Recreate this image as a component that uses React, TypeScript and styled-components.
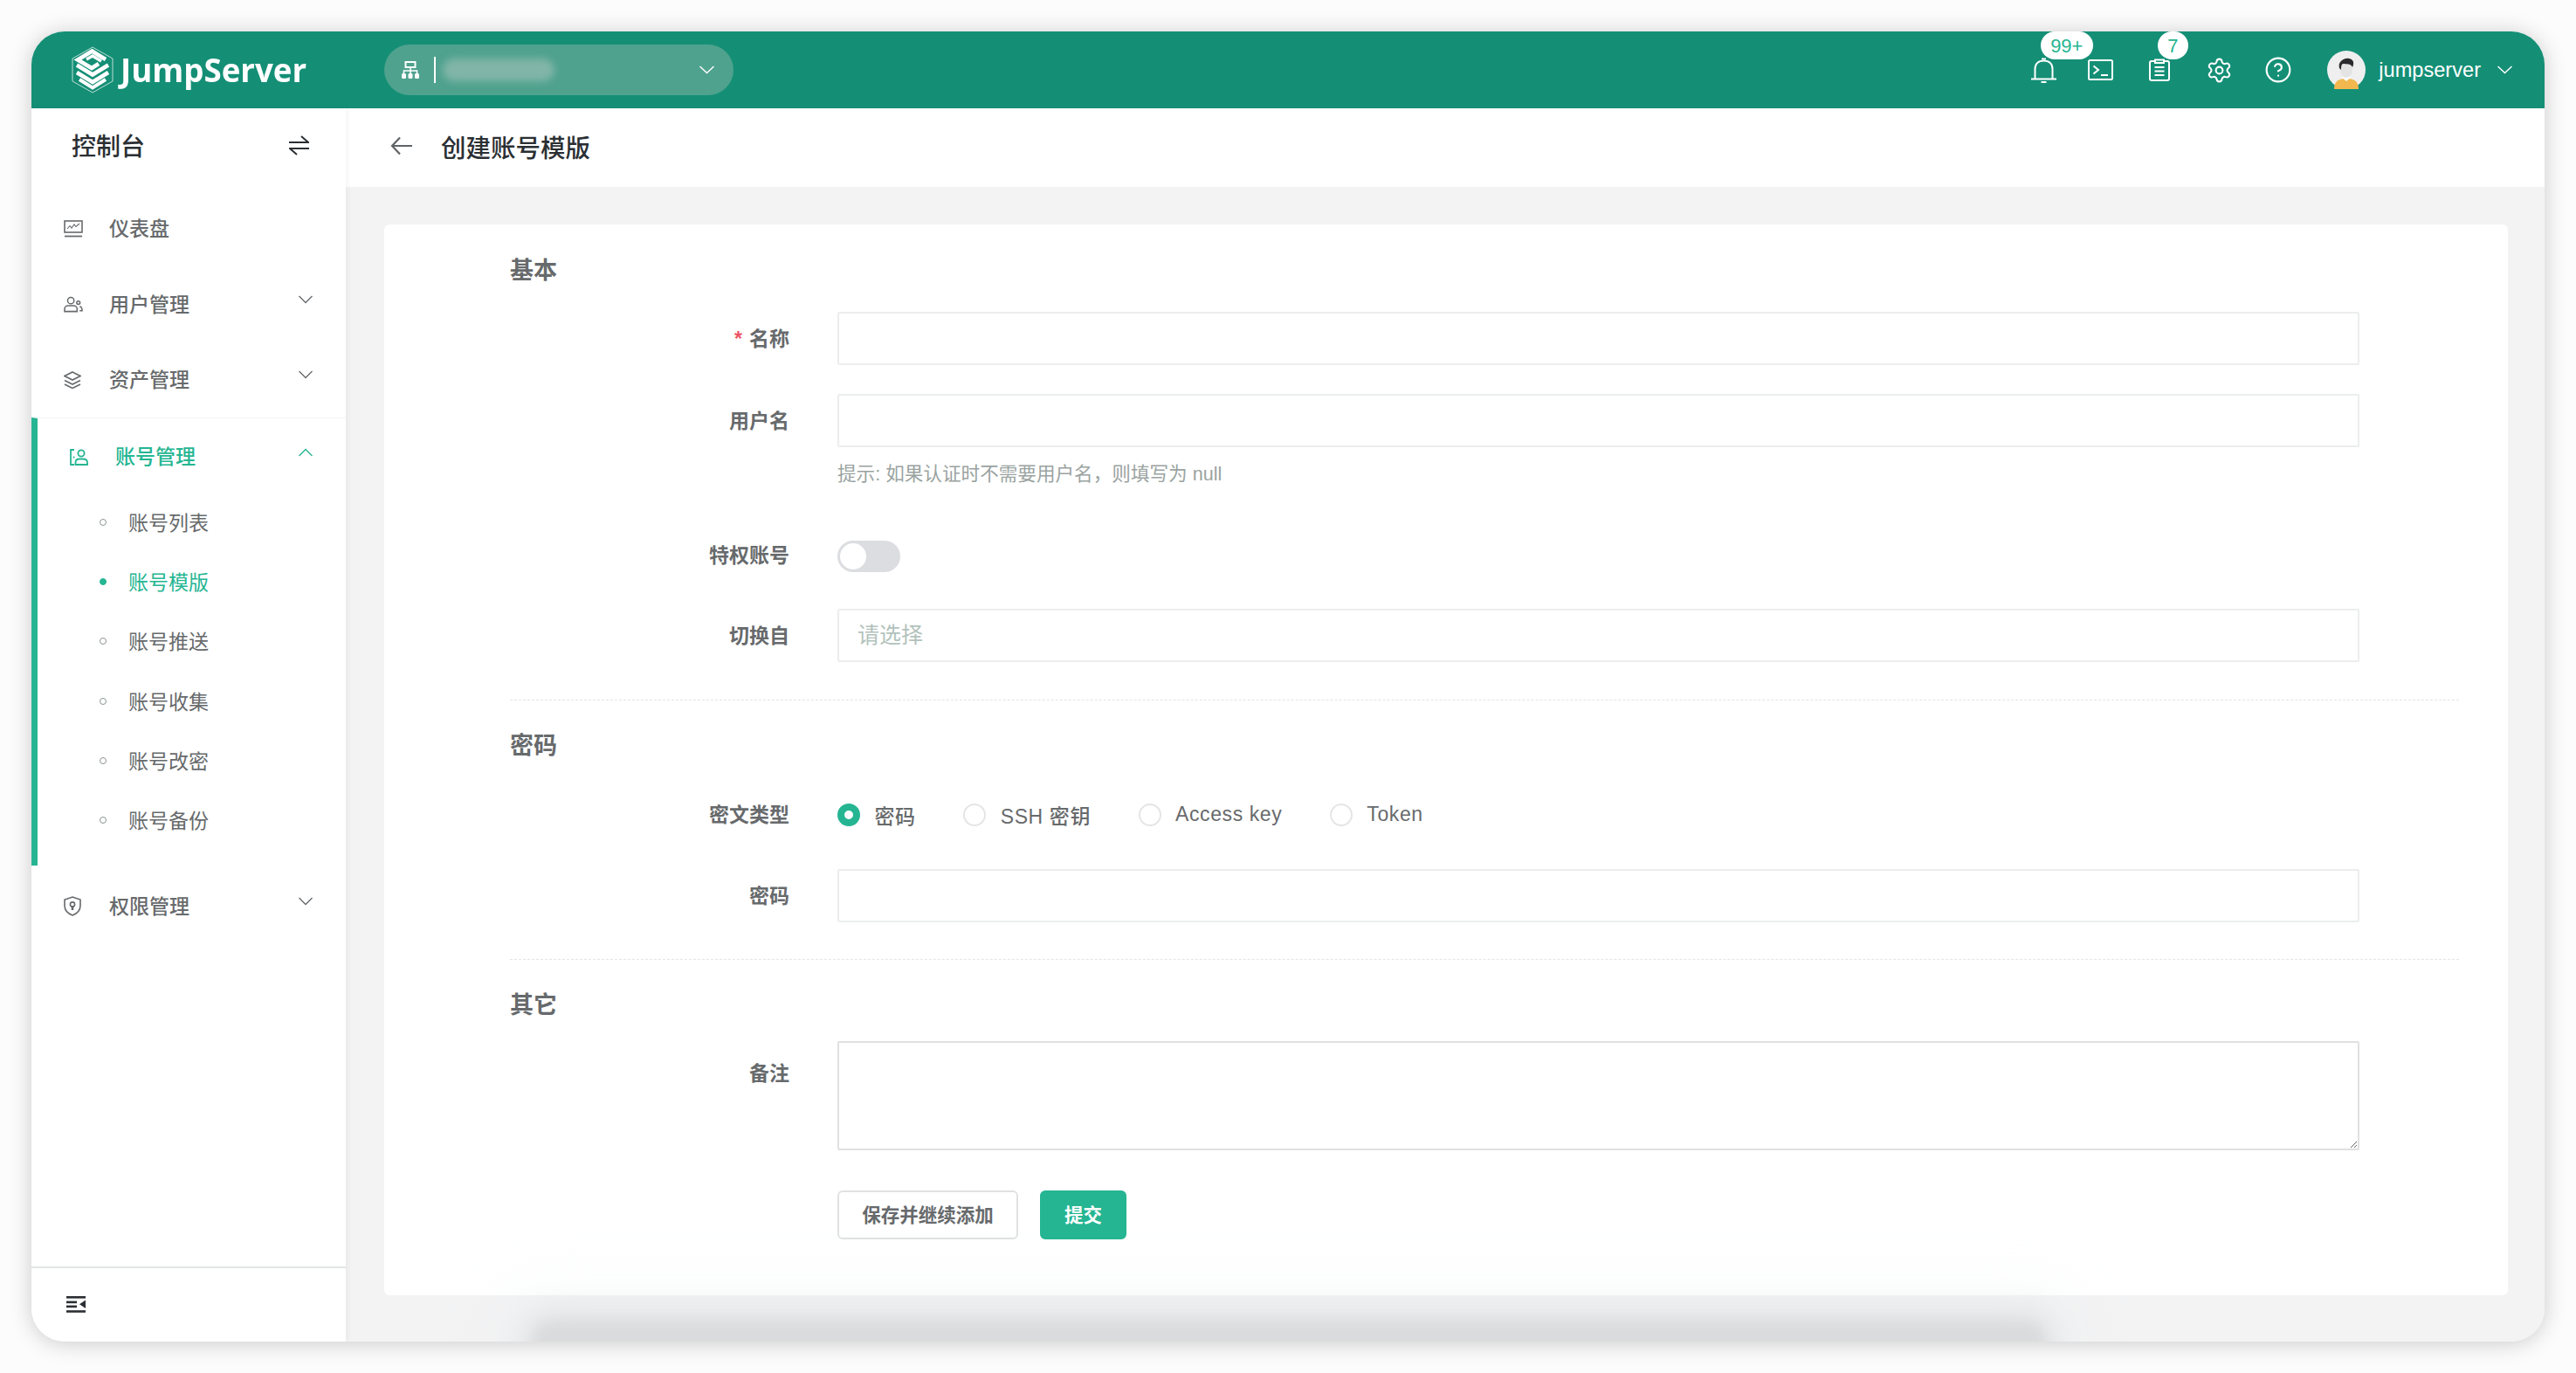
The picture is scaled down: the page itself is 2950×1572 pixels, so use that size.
import React from "react";
import styled, { createGlobalStyle } from "styled-components";
import { Settings, CircleHelp } from "lucide-react";

const Global = createGlobalStyle`
  html, body {
    margin: 0;
    width: 2950px;
    height: 1572px;
    background: #fcfcfc;
    overflow: hidden;
  }
  * { box-sizing: border-box; }
  body { font-family: "Liberation Sans", "Noto Sans CJK SC", sans-serif; color: #676a6c; }
`;

const teal = "#25b592";
const grey = "#676a6c";

const Page = styled.div`
  padding: 36px;
`;

const Window = styled.div`
  width: 2878px;
  height: 1500px;
  border-radius: 38px;
  overflow: hidden;
  display: flex;
  flex-direction: column;
  background: #fff;
  box-shadow: 0 2px 26px rgba(0, 0, 0, 0.2);
`;

const Header = styled.header`
  height: 88px;
  flex: none;
  display: flex;
  align-items: center;
  background: #148f76;
  color: #fff;
`;

const Brand = styled.div`
  width: 404px;
  padding-left: 46px;
  display: flex;
  align-items: center;
  gap: 8px;
`;

const BrandName = styled.span`
  font-family: "Open Sans", "Liberation Sans", sans-serif;
  font-size: 38px;
  font-weight: 700;
  line-height: 54px;
  margin-top: -3px;
  color: #fff;
  transform: scaleX(0.965);
  transform-origin: left center;
`;

const OrgPill = styled.div`
  width: 400px;
  height: 58px;
  border-radius: 29px;
  background: #4fa28e;
  display: flex;
  align-items: center;
  padding: 0 22px 0 19px;
`;

const OrgDivider = styled.span`
  width: 2px;
  height: 30px;
  background: #fff;
  margin: 0 8px 0 16px;
`;

const OrgBlur = styled.span`
  width: 128px;
  height: 26px;
  border-radius: 13px;
  background: rgba(150, 190, 178, 0.7);
  filter: blur(4px);
`;

const OrgChevron = styled.span`
  margin-left: auto;
  display: flex;
`;

const Tools = styled.div`
  margin-left: auto;
  padding-right: 37px;
  display: flex;
  align-items: center;
  height: 100%;
`;

const ToolSlot = styled.div<{ $shift?: number }>`
  position: relative;
  width: 68px;
  height: 100%;
  padding-left: ${(p) => p.$shift || 0}px;
  display: flex;
  align-items: center;
  justify-content: center;
`;

const Badge = styled.span<{ $left: number; $width: number }>`
  position: absolute;
  top: 0;
  left: ${(p) => p.$left}px;
  width: ${(p) => p.$width}px;
  height: 32px;
  border-radius: 16px;
  background: #fff;
  color: ${teal};
  font-size: 22px;
  line-height: 34px;
  text-align: center;
`;

const Avatar = styled.span`
  display: flex;
  margin-left: 22px;
`;

const UserName = styled.span`
  margin-left: 15px;
  font-size: 23.6px;
  color: #fff;
`;

const UserChevron = styled.span`
  margin-left: 19px;
  display: flex;
`;

const Body = styled.div`
  flex: 1;
  min-height: 0;
  display: flex;
`;

const Sidebar = styled.aside`
  width: 360px;
  flex: none;
  display: flex;
  flex-direction: column;
  background: #fff;
  box-shadow: 2px 0 6px rgba(0, 0, 0, 0.05);
  z-index: 2;
`;

const SideHead = styled.div`
  height: 94px;
  flex: none;
  padding: 0 42px 10px 46px;
  display: flex;
  align-items: center;
  justify-content: space-between;
  font-size: 28px;
  font-weight: 500;
  color: #2b2f33;
`;

const Menu = styled.nav`
  flex: 1;
`;

const MenuItem = styled.div<{ $top?: number }>`
  height: 86.5px;
  margin-top: ${(p) => p.$top || 0}px;
  padding: 0 38px 2px 37px;
  display: flex;
  align-items: center;
  font-size: 23px;
  font-weight: 500;
  color: ${grey};
`;

const MenuIcon = styled.span`
  width: 22px;
  display: flex;
  margin: 4px 30px 0 0;
`;

const MenuArrow = styled.span<{ $up?: number }>`
  margin-left: auto;
  margin-top: ${(p) => p.$up ?? -8}px;
  display: flex;
`;

const ActiveGroup = styled.div`
  border-top: 1px solid #f1f2f3;
  border-left: 7px solid ${teal};
  padding-bottom: 17px;
`;

const ActiveHead = styled.div`
  height: 86px;
  padding: 0 38px 1px 37px;
  display: flex;
  align-items: center;
  font-size: 23px;
  font-weight: 500;
  color: ${teal};
`;

const SubItem = styled.div<{ $on?: boolean }>`
  height: 68.3px;
  padding: 0 0 4px 71px;
  display: flex;
  align-items: center;
  font-size: 23px;
  color: ${(p) => (p.$on ? teal : grey)};
`;

const SubDot = styled.span<{ $on?: boolean }>`
  width: 8px;
  height: 8px;
  border-radius: 50%;
  margin: 2px 25px 0 0;
  border: 1.5px solid ${(p) => (p.$on ? teal : "#8b9492")};
  background: ${(p) => (p.$on ? teal : "transparent")};
`;

const SideFoot = styled.div`
  height: 86px;
  flex: none;
  border-top: 2px solid #e3e4e5;
  padding-left: 40px;
  padding-bottom: 2px;
  display: flex;
  align-items: center;
`;

const Main = styled.main`
  position: relative;
  flex: 1;
  min-width: 0;
  overflow: hidden;
  background: #f3f3f4;

  /* soft shadow that bleeds up from below the window */
  &::after {
    content: "";
    position: absolute;
    left: 214px;
    bottom: -36px;
    width: 1733px;
    height: 60px;
    border-radius: 24px;
    background: #dadbdc;
    filter: blur(7px);
    box-shadow: 0 0 24px 16px rgba(224, 225, 227, 0.7), 0 0 60px 40px rgba(234, 235, 236, 0.22);
  }
`;

const PageHead = styled.div`
  height: 90px;
  padding: 0 0 4px 51px;
  display: flex;
  align-items: center;
  background: #fff;
`;

const PageTitle = styled.h1`
  margin: 0 0 0 33px;
  font-size: 28.5px;
  font-weight: 500;
  color: #2b2f33;
`;

const Content = styled.div`
  padding: 43px 42px 0 44px;
`;

const Card = styled.form`
  height: 1226px;
  border-radius: 6px;
  background: #fff;
  padding: 33px 56px 0 144px;
`;

const SectionTitle = styled.h3<{ $top?: number }>`
  margin: ${(p) => p.$top || 0}px 0 0;
  height: 40px;
  line-height: 40px;
  font-size: 27px;
  font-weight: 700;
  color: ${grey};
`;

const Field = styled.div<{ $top: number; $start?: boolean }>`
  margin-top: ${(p) => p.$top}px;
  display: grid;
  grid-template-columns: 320px 1743px;
  column-gap: 55px;
  align-items: ${(p) => (p.$start ? "start" : "center")};
  min-height: 61px;
`;

const Label = styled.label<{ $tall?: boolean; $up?: number }>`
  text-align: right;
  font-size: 23px;
  font-weight: 700;
  color: ${grey};
  margin-top: ${(p) => p.$up || 0}px;
  line-height: ${(p) => (p.$tall ? "74px" : "30px")};
`;

const Required = styled.span`
  color: #ed5565;
  margin-right: 8px;
`;

const TextInput = styled.input`
  display: block;
  width: 100%;
  height: 61px;
  padding: 0 21px;
  border: 2px solid #ecedee;
  border-radius: 2px;
  outline: none;
  background: #fff;
  font-family: inherit;
  font-size: 25px;

  &::placeholder {
    color: #b2c2bc;
    opacity: 1;
  }
`;

const TextArea = styled.textarea`
  display: block;
  width: 100%;
  height: 125px;
  border: 2px solid #e0e1e2;
  border-radius: 2px;
  outline: none;
  resize: both;
  background: #fff;
`;

const Hint = styled.div`
  margin: 16px 0 0 375px;
  height: 30px;
  line-height: 30px;
  font-size: 21.6px;
  color: #9aa3a1;
`;

const Toggle = styled.span`
  display: block;
  width: 72px;
  height: 36px;
  margin-top: -2px;
  padding: 3px;
  border-radius: 18px;
  background: #dcdde0;

  &::before {
    content: "";
    display: block;
    width: 30px;
    height: 30px;
    border-radius: 50%;
    background: #fff;
  }
`;

const Divider = styled.hr<{ $top: number }>`
  margin: ${(p) => p.$top}px 0 0;
  height: 0;
  border: 0;
  border-top: 1px dashed #e4e5e6;
`;

const RadioGroup = styled.div`
  display: flex;
  align-items: center;
  gap: 54.5px;
  margin-top: -2px;
`;

const RadioOption = styled.span`
  display: flex;
  align-items: center;
  gap: 16.5px;
  font-size: 23px;
  font-weight: 500;
  letter-spacing: 0.6px;
  color: ${grey};
`;

const RadioMark = styled.span<{ $on?: boolean }>`
  width: 26px;
  height: 26px;
  border-radius: 50%;
  border: ${(p) => (p.$on ? `8.5px solid ${teal}` : "2px solid #e4e5e6")};
  background: #fff;
`;

const Actions = styled.div`
  margin: 46px 0 0 375px;
  display: flex;
  gap: 25px;
`;

const Button = styled.button<{ $primary?: boolean }>`
  height: 56px;
  width: ${(p) => (p.$primary ? 99 : 207)}px;
  border-radius: 6px;
  border: 2px solid ${(p) => (p.$primary ? teal : "#e0e1e2")};
  background: ${(p) => (p.$primary ? teal : "#fff")};
  color: ${(p) => (p.$primary ? "#fff" : grey)};
  font-family: inherit;
  font-size: 21.5px;
  font-weight: 700;
  padding: 0 0 4px;
`;

const Chevron = ({ up, color, w = 16, h = 8 }: { up?: boolean; color: string; w?: number; h?: number }) => (
  <svg width={w} height={h + 2} viewBox="0 0 16 10" preserveAspectRatio="none" fill="none">
    <path d={up ? "M0.5 9 L8 1.5 L15.5 9" : "M0.5 1 L8 8.5 L15.5 1"} stroke={color} strokeWidth="1.3" />
  </svg>
);

const Logo = () => (
  <svg width="48" height="54" viewBox="0 0 48 54" fill="none">
    <path d="M24 1 L47 14 V40 L24 53 L1 40 V14 Z" stroke="#cfe6df" strokeWidth="0.9" />
    <path d="M39 15 L29 9 L23.5 5.5 L7 15.5 L23 25 L31 20" stroke="#fff" strokeWidth="4.6" />
    <path d="M17 15 L24 11 L34 17" stroke="#fff" strokeWidth="3.4" />
    <path d="M6 21.5 L24 32.5 L42 21.5" stroke="#fff" strokeWidth="4.6" />
    <path d="M6 30 L24 41 L42 30" stroke="#fff" strokeWidth="4.6" />
    <path d="M9 38 L24 47.5 L39 38" stroke="#fff" strokeWidth="4" />
  </svg>
);

const OrgIcon = () => (
  <svg width="22" height="21" viewBox="0 0 22 21" fill="none">
    <rect x="5.5" y="1" width="11" height="6" stroke="#fff" strokeWidth="2" />
    <path d="M11 7 V11 M3.5 14 V11 H18.5 V14 M11 11 V14" stroke="#fff" strokeWidth="1.6" />
    <rect x="1" y="14" width="5" height="6" rx="1.5" fill="#fff" />
    <rect x="8.5" y="14" width="5" height="6" rx="1.5" fill="#fff" />
    <rect x="16" y="14" width="5" height="6" rx="1.5" fill="#fff" />
  </svg>
);

const BellIcon = () => (
  <svg width="29" height="29" viewBox="0 0 29 29" fill="none" stroke="#fff" strokeWidth="2">
    <path d="M4.5 24 V13 C4.5 7 8.5 3.5 14.5 3.5 C20.5 3.5 24.5 7 24.5 13 V24" />
    <path d="M0 24.5 H29" />
    <path d="M12 1.5 H17" />
    <path d="M11.5 28 H17.5" />
  </svg>
);

const TerminalIcon = () => (
  <svg width="29" height="24" viewBox="0 0 29 24" fill="none" stroke="#fff" strokeWidth="2">
    <rect x="1" y="1" width="27" height="22" rx="1.5" />
    <path d="M6.5 7.5 L12 12 L6.5 16.5" />
    <path d="M15 18 H23" />
  </svg>
);

const ClipboardIcon = () => (
  <svg width="24" height="26" viewBox="0 0 24 26" fill="none" stroke="#fff" strokeWidth="2">
    <path d="M6 3 H3 A2 2 0 0 0 1 5 V23 A2 2 0 0 0 3 25 H21 A2 2 0 0 0 23 23 V5 A2 2 0 0 0 21 3 H18" />
    <path d="M7 1.5 H17 V5 H7 Z" />
    <path d="M6.5 10 H17.5 M6.5 14.5 H17.5 M6.5 19 H17.5" />
  </svg>
);

const UserAvatar = () => (
  <svg width="44" height="44" viewBox="0 0 44 44">
    <circle cx="22" cy="22" r="22" fill="#efefef" />
    <path d="M8 44 C8 34 14 32 22 32 C30 32 36 34 36 44 Z" fill="#f2b84f" />
    <path d="M17 31 L22 35 L27 31 L25 25 H19 Z" fill="#fafafa" />
    <ellipse cx="22" cy="22" rx="7" ry="9" fill="#e4e4e4" />
    <path d="M14 20 C12 12 20 8 25 9 C31 10 31 15 29 19 C27 14 22 16 18 15 C16 16 16 19 16 22 Z" fill="#2b2b2e" />
  </svg>
);

const menuStroke = { fill: "none", stroke: grey, strokeWidth: 1.6 };

const DashIcon = () => (
  <svg width="22" height="20" viewBox="0 0 22 20" {...menuStroke}>
    <rect x="1" y="1" width="20" height="13" />
    <path d="M4 10 L7 6.5 L9 9 L12 5 L14 7.5 L18 4" strokeWidth="1.1" />
    <path d="M1 18.5 H21" strokeWidth="1.8" />
  </svg>
);

const UsersIcon = () => (
  <svg width="23" height="19" viewBox="0 0 23 19" {...menuStroke}>
    <circle cx="8.5" cy="5" r="3.8" />
    <path d="M1 18 V15 C1 12.5 3 11 5 11 H12 C14 11 16 12.5 16 15 V18 Z" />
    <circle cx="17.5" cy="7.5" r="2" />
    <path d="M19 12 C21 12 22 14 22 17 H19" />
  </svg>
);

const StackIcon = () => (
  <svg width="20" height="20" viewBox="0 0 20 20" {...menuStroke}>
    <path d="M10 1 L19 5.5 L10 10 L1 5.5 Z" />
    <path d="M1 10.5 L10 15 L19 10.5" />
    <path d="M1 15 L10 19.5 L19 15" />
  </svg>
);

const AccountIcon = () => (
  <svg width="21" height="19" viewBox="0 0 21 19" fill="none" stroke={teal} strokeWidth="1.8">
    <path d="M5 1 H1 V18 H5" />
    <circle cx="13" cy="5" r="3.6" />
    <path d="M6.5 18 V15.5 C6.5 12.5 9 11.5 11 11.5 H15 C17.5 11.5 20 12.5 20 15.5 V18 Z" />
    <circle cx="4.6" cy="9.5" r="1" fill={teal} stroke="none" />
  </svg>
);

const ShieldIcon = () => (
  <svg width="20" height="23" viewBox="0 0 20 23" {...menuStroke}>
    <path d="M10 1 L19 4 V11 C19 16.5 15 20 10 22 C5 20 1 16.5 1 11 V4 Z" />
    <circle cx="10" cy="9.5" r="2.6" />
    <path d="M10 11 V16" strokeWidth="2.6" />
  </svg>
);

const SwapIcon = () => (
  <svg width="23" height="23" viewBox="0 0 23 23" fill="none" stroke="#2b2f33" strokeWidth="2">
    <path d="M0 8 H22 L14 1" />
    <path d="M23 15 H1 L9 22" />
  </svg>
);

const BackIcon = () => (
  <svg width="25" height="22" viewBox="0 0 25 22" fill="none" stroke="#5f6468" strokeWidth="2.2">
    <path d="M25 11 H2" />
    <path d="M11 1.5 L2 11 L11 20.5" />
  </svg>
);

const CollapseIcon = () => (
  <svg width="22" height="19" viewBox="0 0 22 19" fill="#2b2f33">
    <rect x="0" y="0" width="22" height="2.6" />
    <rect x="0" y="5.6" width="12" height="2.6" />
    <rect x="0" y="10.6" width="12" height="2.6" />
    <rect x="0" y="16.2" width="22" height="2.6" />
    <path d="M22 4.5 V14 L15 9.3 Z" />
  </svg>
);

const subItems = ["账号列表", "账号模版", "账号推送", "账号收集", "账号改密", "账号备份"];

export default function App() {
  return (
    <Page>
      <Global />
      <Window>
        <Header>
          <Brand>
            <Logo />
            <BrandName>JumpServer</BrandName>
          </Brand>
          <OrgPill>
            <OrgIcon />
            <OrgDivider />
            <OrgBlur />
            <OrgChevron>
              <Chevron color="#fff" w={17} h={8} />
            </OrgChevron>
          </OrgPill>
          <Tools>
            <ToolSlot $shift={6}>
              <BellIcon />
              <Badge $left={33.5} $width={60}>99+</Badge>
            </ToolSlot>
            <ToolSlot>
              <TerminalIcon />
            </ToolSlot>
            <ToolSlot>
              <ClipboardIcon />
              <Badge $left={31.5} $width={35}>7</Badge>
            </ToolSlot>
            <ToolSlot>
              <Settings size={31} color="#fff" strokeWidth={1.6} />
            </ToolSlot>
            <ToolSlot>
              <CircleHelp size={32} color="#fff" strokeWidth={1.6} />
            </ToolSlot>
            <Avatar>
              <UserAvatar />
            </Avatar>
            <UserName>jumpserver</UserName>
            <UserChevron>
              <Chevron color="#fff" w={17} h={8} />
            </UserChevron>
          </Tools>
        </Header>
        <Body>
          <Sidebar>
            <SideHead>
              控制台
              <SwapIcon />
            </SideHead>
            <Menu>
              <MenuItem>
                <MenuIcon><DashIcon /></MenuIcon>
                仪表盘
              </MenuItem>
              <MenuItem>
                <MenuIcon><UsersIcon /></MenuIcon>
                用户管理
                <MenuArrow><Chevron color={grey} /></MenuArrow>
              </MenuItem>
              <MenuItem>
                <MenuIcon><StackIcon /></MenuIcon>
                资产管理
                <MenuArrow><Chevron color={grey} /></MenuArrow>
              </MenuItem>
              <ActiveGroup>
                <ActiveHead>
                  <MenuIcon><AccountIcon /></MenuIcon>
                  账号管理
                  <MenuArrow $up={-6}><Chevron up color={teal} /></MenuArrow>
                </ActiveHead>
                {subItems.map((name, i) => (
                  <SubItem key={name} $on={i === 1}>
                    <SubDot $on={i === 1} />
                    {name}
                  </SubItem>
                ))}
              </ActiveGroup>
              <MenuItem $top={2}>
                <MenuIcon><ShieldIcon /></MenuIcon>
                权限管理
                <MenuArrow><Chevron color={grey} /></MenuArrow>
              </MenuItem>
            </Menu>
            <SideFoot>
              <CollapseIcon />
            </SideFoot>
          </Sidebar>
          <Main>
            <PageHead>
              <BackIcon />
              <PageTitle>创建账号模版</PageTitle>
            </PageHead>
            <Content>
              <Card>
                <SectionTitle>基本</SectionTitle>
                <Field $top={27}>
                  <Label><Required>*</Required>名称</Label>
                  <TextInput />
                </Field>
                <Field $top={33}>
                  <Label>用户名</Label>
                  <TextInput />
                </Field>
                <Hint>提示: 如果认证时不需要用户名，则填写为 null</Hint>
                <Field $top={49}>
                  <Label $up={-4}>特权账号</Label>
                  <Toggle />
                </Field>
                <Field $top={29}>
                  <Label>切换自</Label>
                  <TextInput placeholder="请选择" />
                </Field>
                <Divider $top={43} />
                <SectionTitle $top={32}>密码</SectionTitle>
                <Field $top={29}>
                  <Label $up={-2}>密文类型</Label>
                  <RadioGroup>
                    <RadioOption><RadioMark $on />密码</RadioOption>
                    <RadioOption><RadioMark />SSH 密钥</RadioOption>
                    <RadioOption><RadioMark />Access key</RadioOption>
                    <RadioOption><RadioMark />Token</RadioOption>
                  </RadioGroup>
                </Field>
                <Field $top={31}>
                  <Label>密码</Label>
                  <TextInput />
                </Field>
                <Divider $top={42} />
                <SectionTitle $top={32}>其它</SectionTitle>
                <Field $top={21} $start>
                  <Label $tall>备注</Label>
                  <TextArea />
                </Field>
                <Actions>
                  <Button type="button">保存并继续添加</Button>
                  <Button type="button" $primary>提交</Button>
                </Actions>
              </Card>
            </Content>
          </Main>
        </Body>
      </Window>
    </Page>
  );
}
